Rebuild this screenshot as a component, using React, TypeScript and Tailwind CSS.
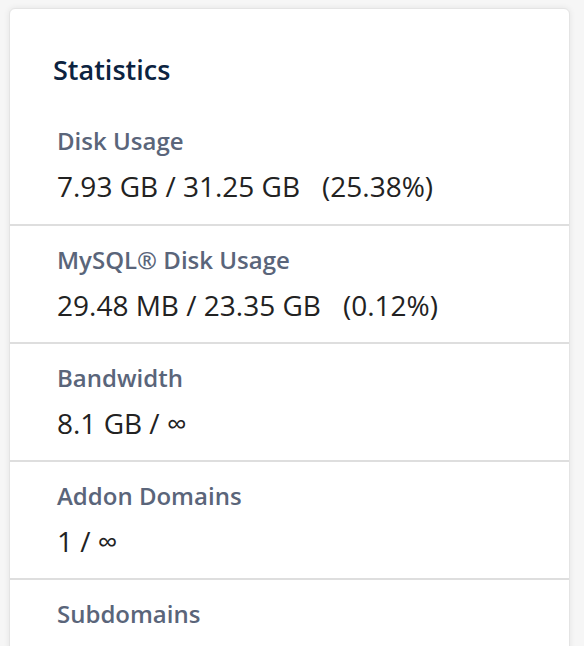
const stats = [
  { label: "Disk Usage", value: "7.93 GB / 31.25 GB", pct: "(25.38%)" },
  { label: "MySQL® Disk Usage", value: "29.48 MB / 23.35 GB", pct: "(0.12%)" },
  { label: "Bandwidth", value: "8.1 GB / ∞" },
  { label: "Addon Domains", value: "1 / ∞" },
  { label: "Subdomains" },
];

export default function App() {
  return (
    <div
      className="h-[646px] overflow-hidden bg-[#f6f6f6] pt-[8px] pl-[9px] pr-[14px]"
      style={{ fontFamily: '"Open Sans", "Noto Sans", sans-serif' }}
    >
      <div className="h-[700px] rounded-t-[6px] border border-[#e4e4e4] bg-white shadow-[0_0_6px_rgba(0,0,0,0.08)]">
        <h2 className="pt-[45px] pl-[43px] text-[27px] leading-[32px] font-semibold text-[#0c2340]">
          Statistics
        </h2>
        <div className="pt-[41px]">
          {stats.map((s, i) => (
            <div
              key={s.label}
              className={
                i === 0
                  ? "pl-[47px] pb-[23px]"
                  : "border-t-2 border-[#dedede] pl-[47px] pt-[20px] pb-[22px]"
              }
            >
              <div className="text-[24px] leading-[28px] font-semibold text-[#5a657a]">{s.label}</div>
              {s.value && (
                <div className="mt-[16px] text-[28px] leading-[30px] text-[#222]">
                  {s.value}
                  {s.pct && <span className="ml-[22px]">{s.pct}</span>}
                </div>
              )}
            </div>
          ))}
        </div>
      </div>
    </div>
  );
}
